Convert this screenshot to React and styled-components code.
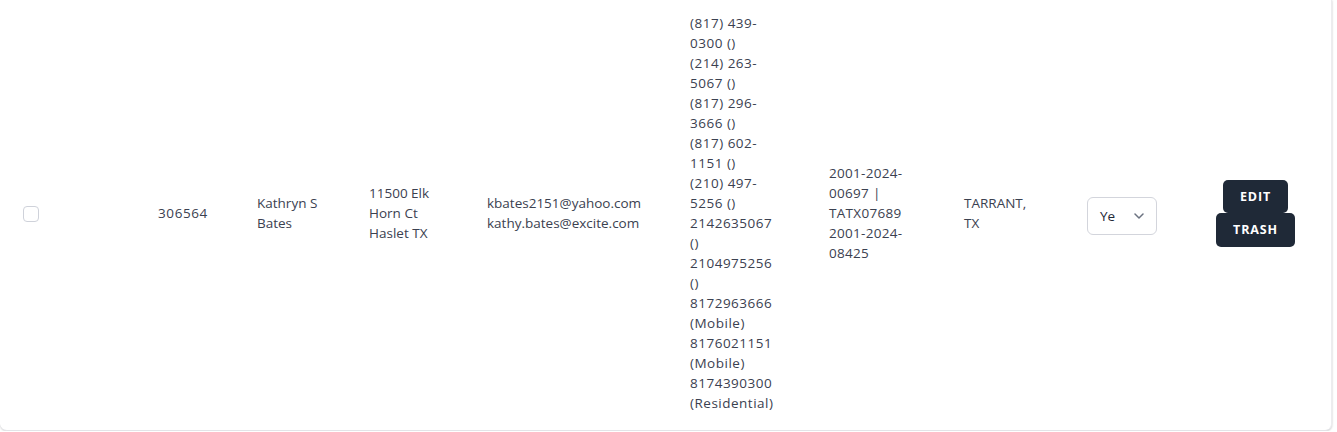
import React from "react";
import styled, { createGlobalStyle } from "styled-components";

const Global = createGlobalStyle`
  html, body { margin: 0; padding: 0; background: #ffffff; }
  body { font-family: "Open Sans", "Noto Sans", sans-serif; }
  * { box-sizing: border-box; }
`;

const Card = styled.div`
  width: 1332px;
  background: #ffffff;
  border-radius: 0 0 7px 7px;
  box-shadow: 0 1px 2px rgba(0, 0, 0, 0.12), 1px 0 2px rgba(0, 0, 0, 0.06);
  border-bottom: 1px solid #e3e4e8;
  border-right: 1px solid #ececef;
`;

const Row = styled.div`
  display: grid;
  grid-template-columns: 158px 99px 112px 118px 203px 139px 135px 123px 129px 1fr;
  align-items: center;
  padding: 13px 0 17px;
  height: 430px;
  font-size: 13.5px;
  line-height: 20px;
  color: #3b4150;
`;

const Cell = styled.div`
  padding-left: ${(p) => p.$pl || 0}px;
  white-space: pre-line;
  letter-spacing: ${(p) => p.$ls || 0}px;
`;

const Check = styled.span`
  display: block;
  width: 16px;
  height: 16px;
  margin-top: 2px;
  border: 1px solid #cfd2da;
  border-radius: 4px;
  background: #fff;
`;

const Select = styled.div`
  width: 70px;
  height: 38px;
  margin-top: 5px;
  border: 1px solid #d3d5dc;
  border-radius: 6px;
  display: flex;
  align-items: center;
  justify-content: space-between;
  padding: 0 12px 0 12px;
  color: #1f2937;
  font-size: 13.5px;
`;

const Actions = styled.div`
  display: inline-flex;
  flex-direction: column;
  align-items: center;
`;

const Btn = styled.button`
  font-family: "Open Sans", "Noto Sans", sans-serif;
  background: #1f2937;
  color: #ffffff;
  border: none;
  border-radius: 5px;
  font-size: 12.5px;
  font-weight: 700;
  letter-spacing: 0.9px;
  height: ${(p) => p.$h}px;
  padding: 0 ${(p) => p.$px}px;
  cursor: pointer;
`;

const phones = [
  "(817) 439-", "0300 ()", "(214) 263-", "5067 ()", "(817) 296-", "3666 ()",
  "(817) 602-", "1151 ()", "(210) 497-", "5256 ()", "2142635067", "()",
  "2104975256", "()", "8172963666", "(Mobile)", "8176021151", "(Mobile)",
  "8174390300", "(Residential)",
];

export default function App() {
  return (
    <>
      <Global />
      <Card>
        <Row>
          <Cell $pl={23}><Check /></Cell>
          <Cell $ls={0.6}>306564</Cell>
          <Cell>{"Kathryn S\nBates"}</Cell>
          <Cell>{"11500 Elk\nHorn Ct\nHaslet TX"}</Cell>
          <Cell>{"kbates2151@yahoo.com\nkathy.bates@excite.com"}</Cell>
          <Cell $ls={0.5}>{phones.join("\n")}</Cell>
          <Cell $ls={0.3}>{"2001-2024-\n00697 |\nTATX07689\n2001-2024-\n08425"}</Cell>
          <Cell>{"TARRANT,\nTX"}</Cell>
          <Cell>
            <Select>
              <span>Ye</span>
              <svg width="10" height="6" viewBox="0 0 10 6" fill="none">
                <path d="M1 1l4 4 4-4" stroke="#6b7280" strokeWidth="1.5" strokeLinecap="round" strokeLinejoin="round" />
              </svg>
            </Select>
          </Cell>
          <Cell>
            <Actions>
              <Btn $h={33} $px={17}>EDIT</Btn>
              <Btn $h={34} $px={17}>TRASH</Btn>
            </Actions>
          </Cell>
        </Row>
      </Card>
    </>
  );
}
